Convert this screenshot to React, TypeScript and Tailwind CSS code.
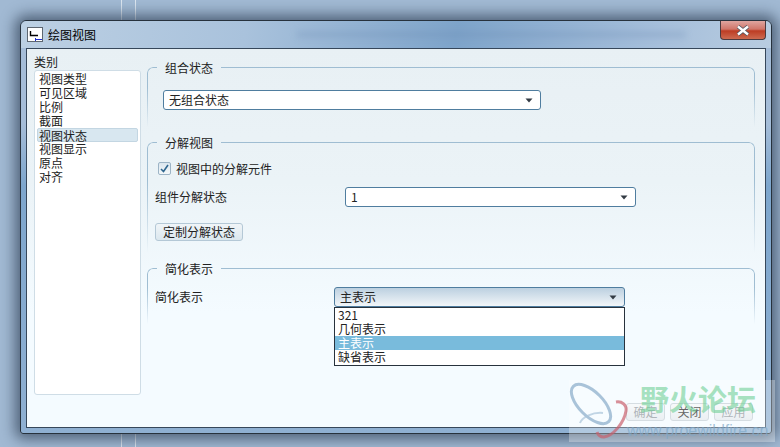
import type { ReactNode } from "react";

const categories = ["视图类型", "可见区域", "比例", "截面", "视图状态", "视图显示", "原点", "对齐"];

function Caret() {
  return (
    <svg width="8" height="5" viewBox="0 0 8 5" className="ml-auto mr-[7px] shrink-0">
      <path d="M0.5 0.5H7.5L4 4.5Z" fill="#333b44" />
    </svg>
  );
}

function Select({ value, width, open }: { value: string; width: string; open?: boolean }) {
  return (
    <div
      className={`flex h-5 items-center rounded-[3px] border border-[#4f7d9f] pl-[5px] ${width} ${
        open ? "bg-[linear-gradient(#bcd0e0,#f2f6f9)]" : "bg-white"
      }`}
    >
      <span className="leading-[14px]">{value}</span>
      <Caret />
    </div>
  );
}

function Group({ title, height, children }: { title: string; height: string; children: ReactNode }) {
  const edge =
    "row-span-2 row-start-1 mt-[6px] border-t border-[#9fbdd2] [mask-image:linear-gradient(#000_35%,transparent)]";
  return (
    <section className={`grid grid-cols-[10px_auto_1fr] grid-rows-[14px_1fr] ${height}`}>
      <div className={`${edge} col-start-1 rounded-tl-md border-l`} />
      <h3 className="col-start-2 row-start-1 px-2 leading-[14px]">{title}</h3>
      <div className={`${edge} col-start-3 rounded-tr-md border-r`} />
      <div className="col-span-3 col-start-1 row-start-2">{children}</div>
    </section>
  );
}

function FooterButton({ label, disabled }: { label: string; disabled?: boolean }) {
  return (
    <button
      className={`h-[18px] w-[39px] rounded-[3px] border border-[#c3ced6] bg-[linear-gradient(#f4f7f9,#e2e9ee)] leading-[14px] ${
        disabled ? "text-[#8d959c]" : "text-[#222]"
      }`}
    >
      {label}
    </button>
  );
}

function Watermark() {
  return (
    <div className="absolute left-[569px] top-[380px] h-[62px] w-[206px] bg-white/30">
      <svg width="70" height="62" viewBox="0 0 70 62" className="absolute left-0 top-0">
        <ellipse cx="22" cy="24" rx="25" ry="12" transform="rotate(45 22 24)" fill="none" stroke="#8fb0cc" strokeWidth="3" opacity="0.75" />
        <path d="M47 22C53 21 58 25 57 31C55 43 44 56 35 57C31 57 29 55 28 52" fill="none" stroke="#c9616d" strokeWidth="3" opacity="0.7" />
        <path d="M11 43C13 37 24 32 34 33" fill="none" stroke="#a9c4da" strokeWidth="2" opacity="0.7" />
      </svg>
      <div className="absolute left-[71px] top-0 font-['Noto_Sans_CJK_SC',sans-serif] text-[29px] font-bold leading-[36px] text-[#6fd096]/60">
        野火论坛
      </div>
      <div className="absolute left-[58px] top-[42px] font-['Liberation_Sans',sans-serif] text-[16px] leading-[18px] text-[#7fa8c8]/70">
        www.proewildfire.cn
      </div>
    </div>
  );
}

export default function App() {
  return (
    <div className="relative h-[447px] w-[780px] overflow-hidden bg-[#a1b9d3] font-['Noto_Sans_CJK_SC','Liberation_Sans',sans-serif] text-[12px] text-[#222]">
      {/* desktop lines behind the dialog */}
      <div className="absolute left-[121px] top-0 h-full w-px bg-[#dbe5ef]" />
      <div className="absolute left-[135px] top-0 h-full w-px bg-[#dbe5ef]" />

      <div className="absolute left-5 top-5 flex h-[414px] w-[752px] flex-col rounded-t-[6px] rounded-b-[3px] border border-[#27323d] bg-[linear-gradient(#a5bdd8_25%,#7da6cd_40%,#8fb0d2)] shadow-[0_0_14px_5px_rgba(25,40,60,0.6)]">
        <header className="flex h-[27px] shrink-0 rounded-t-[6px] bg-[linear-gradient(100deg,#bcd0e3,#a9c2dc_30%,#7ea4ca_58%,#a6bfdb_85%,#b8cce0)] pl-[6px]">
          <div className="mt-[6px] flex h-[15px] w-4 border border-[#5d6670] bg-white">
            <svg width="14" height="13" viewBox="0 0 14 13">
              <path d="M2.5 3V7.5H10" fill="none" stroke="#000" strokeWidth="1.4" />
              <path d="M7 11.5H14M7.5 10V13" fill="none" stroke="#1f2fd0" strokeWidth="1" />
            </svg>
          </div>
          <span className="ml-[5px] mt-[7px] h-[14px] leading-[14px] text-black">绘图视图</span>
          <div className="ml-[200px] mt-[10px] h-[7px] w-[390px] rounded-full bg-[#6c8db4]/25 blur-[3px]" />
          <button className="ml-auto mr-[5px] flex h-[19px] w-[46px] items-center justify-center rounded-b-[4px] border border-t-0 border-[#4b3a3f] bg-[linear-gradient(#dfa59f,#d0766a_45%,#bd3d24_55%,#cd6a50)]">
            <svg width="14" height="11" viewBox="0 0 14 11">
              <path d="M2 1.5L12 9.5M12 1.5L2 9.5" stroke="#4a5560" strokeWidth="4" />
              <path d="M2 1.5L12 9.5M12 1.5L2 9.5" stroke="#fff" strokeWidth="2.4" />
            </svg>
          </button>
        </header>

        <div className="mx-[5px] mb-[5px] flex flex-1 flex-col border border-[#36475a] bg-[linear-gradient(#e8f0f4,#ebf3f7_35%,#f4fbff_70%)] px-[7px]">
          <div className="flex h-[346px] gap-[6px]">
            <aside className="flex w-[107px] flex-col">
              <div className="mt-[6px] h-[15px] leading-[14px]">类别</div>
              <ul className="flex-1 rounded-[3px] border border-[#cfdde6] bg-white pl-[2px] pr-[2px] pt-px">
                {categories.map((name) => (
                  <li
                    key={name}
                    className={`h-[14px] leading-[14px] ${
                      name === "视图状态"
                        ? "rounded-[2px] border border-[#c3d6e2] bg-[#d8e7f0] pl-px leading-[12px]"
                        : "pl-[2px]"
                    }`}
                  >
                    {name}
                  </li>
                ))}
              </ul>
            </aside>

            <main className="flex w-[608px] flex-col gap-[9px] pt-3">
              <Group title="组合状态" height="h-[66px]">
                <div className="pl-4 pt-[15px]">
                  <Select value="无组合状态" width="w-[378px]" />
                </div>
              </Group>

              <Group title="分解视图" height="h-[117px]">
                <div className="pl-2 pt-3">
                  <label className="flex h-[13px] items-center pl-[3px]">
                    <span className="flex size-[13px] items-center justify-center rounded-[2px] border border-[#9db4c6] bg-[linear-gradient(#dbe6ee,#f4f8fa)]">
                      <svg width="9" height="9" viewBox="0 0 9 9">
                        <path d="M1 5L3.5 7.5L8 1" fill="none" stroke="#2f668f" strokeWidth="1.6" />
                      </svg>
                    </span>
                    <span className="ml-[5px] leading-[14px]">视图中的分解元件</span>
                  </label>
                  <div className="mt-3 flex items-center">
                    <span className="w-[190px] leading-[14px]">组件分解状态</span>
                    <Select value="1" width="w-[291px]" />
                  </div>
                  <button className="mt-4 block h-[18px] w-[88px] rounded-[3px] border border-[#b4c8d6] bg-[linear-gradient(#f0f5f8,#dbe7ee)] leading-[14px]">
                    定制分解状态
                  </button>
                </div>
              </Group>

              <Group title="简化表示" height="h-[62px]">
                <div className="flex items-center pl-2 pt-[11px]">
                  <span className="w-[179px] leading-[14px]">简化表示</span>
                  <div className="relative">
                    <Select value="主表示" width="w-[291px]" open />
                    <ul className="absolute left-0 top-full w-[291px] border border-[#27323d] bg-white pb-px">
                      <li className="h-[14px] pl-[3px] leading-[14px]">321</li>
                      <li className="h-[14px] pl-[3px] leading-[14px]">几何表示</li>
                      <li className="h-[14px] bg-[#79bbdc] pl-[3px] leading-[14px] text-white">主表示</li>
                      <li className="h-[14px] pl-[3px] leading-[14px]">缺省表示</li>
                    </ul>
                  </div>
                </div>
              </Group>
            </main>
          </div>

          <footer className="mt-2 flex justify-end gap-[5px] pr-[5px]">
            <FooterButton label="确定" disabled />
            <FooterButton label="关闭" />
            <FooterButton label="应用" disabled />
          </footer>
        </div>
      </div>

      <Watermark />
    </div>
  );
}
